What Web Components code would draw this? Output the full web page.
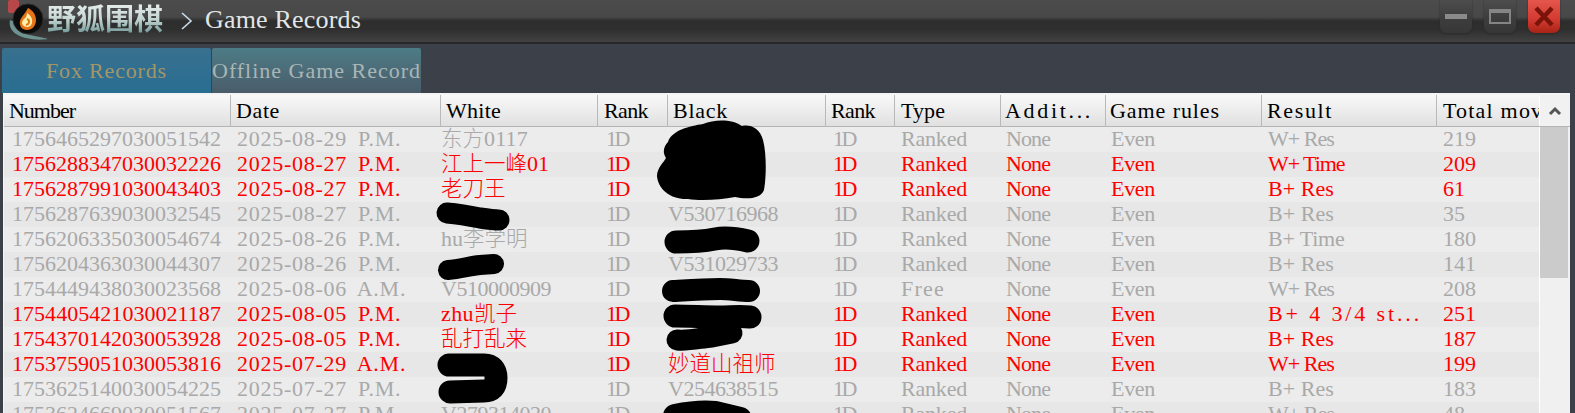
<!DOCTYPE html>
<html>
<head>
<meta charset="utf-8">
<title>Game Records</title>
<style>
  html, body { margin: 0; height: 413px; overflow: hidden; background: #3c4048; }
  body { display: flex; flex-direction: column; font-family: "Liberation Serif", "Noto Sans CJK SC", serif; }
</style>
</head>
<body>
<fox-titlebar>Game Records</fox-titlebar>
<fox-tabs>
  <fox-tab active>Fox Records</fox-tab>
  <fox-tab>Offline Game Record</fox-tab>
</fox-tabs>
<record-table></record-table>

<script>
const COLUMNS = [227, 210, 157, 70, 158, 69, 106, 105, 156, 175, 102];
const HEAD_PAD = [5, 5, 5, 6, 5, 5, 6, 4, 4, 5, 6];
const CELL_PAD = [8, 6, 0, 8, 0, 7, 6, 5, 5, 6, 6];
const HEADS = ["Number", "Date", "White", "Rank", "Black", "Rank", "Type", "Addit...", "Game rules", "Result", "Total moves"];

// [red?, number, date, white, black, type, result, moves]
const ROWS = [
  [0, "1756465297030051542", "2025-08-29 P.M.", "东方0117", "", "Ranked", "W+ Res", "219"],
  [1, "1756288347030032226", "2025-08-27 P.M.", "江上一峰01", "", "Ranked", "W+ Time", "209"],
  [1, "1756287991030043403", "2025-08-27 P.M.", "老刀王", "", "Ranked", "B+ Res", "61"],
  [0, "1756287639030032545", "2025-08-27 P.M.", "", "V530716968", "Ranked", "B+ Res", "35"],
  [0, "1756206335030054674", "2025-08-26 P.M.", "hu李学明", "", "Ranked", "B+ Time", "180"],
  [0, "1756204363030044307", "2025-08-26 P.M.", "", "V531029733", "Ranked", "B+ Res", "141"],
  [0, "1754449438030023568", "2025-08-06 A.M.", "V510000909", "", "Free", "W+ Res", "208"],
  [1, "1754405421030021187", "2025-08-05 P.M.", "zhu凯子", "", "Ranked", "B+ 4 3/4 st...", "251"],
  [1, "1754370142030053928", "2025-08-05 P.M.", "乱打乱来", "", "Ranked", "B+ Res", "187"],
  [1, "1753759051030053816", "2025-07-29 A.M.", "", "妙道山祖师", "Ranked", "W+ Res", "199"],
  [0, "1753625140030054225", "2025-07-27 P.M.", "", "V254638515", "Ranked", "B+ Res", "183"],
  [0, "1753624669030051567", "2025-07-27 P.M.", "V279314020", "", "Ranked", "W+ Res", "48"]
];

const SERIF = `font-family: "Liberation Serif", serif; font-size: 22px;`;
const measure = document.createElement("canvas").getContext("2d");

// the reference font is fixed width (half an em per latin char), the installed serif
// is not, so each run gets the spacing that brings it back to that width
function fit(text, advance = 11, size = 22) {
  measure.font = `${size}px "Liberation Serif"`;
  const date = text.match(/^(\S+-\S+) (\S+)$/);
  if (date) {
    // keep the A.M./P.M. part on the same column in every row
    const ls = (advance * date[1].length - measure.measureText(date[1]).width) / date[1].length;
    const ws = advance - measure.measureText(" ").width - ls;
    return `letter-spacing:${ls.toFixed(2)}px;word-spacing:${ws.toFixed(2)}px;`;
  }
  const ls = (advance * text.length - measure.measureText(text).width) / text.length;
  return `letter-spacing:${ls.toFixed(2)}px;`;
}

// CJK runs are twice the width of the latin ones, so they get their own span
function cellHtml(text) {
  return text.split(/([\u4e00-\u9fff]+)/).filter(Boolean).map((part) =>
    /[\u4e00-\u9fff]/.test(part)
      ? `<span class="cjk">${part}</span>`
      : `<span style="${fit(part)}">${part}</span>`).join("");
}

class WindowButton extends HTMLElement {
  constructor() {
    super();
    this.attachShadow({ mode: "open" });
    this.shadowRoot.innerHTML = `
      <style>
        :host { display: flex; width: 32px; height: 33px; border-radius: 0 0 7px 7px; align-items: center; justify-content: center;
          background: linear-gradient(#4d4d4d, #3d3d3d 55%, #373737); box-shadow: 0 1px 2px #2a2a2a; }
        :host([kind="close"]) { background: linear-gradient(#e4564c, #d23a30 60%, #a92316); }
        svg { display: block; }
      </style>
      <svg width="32" height="33" viewBox="0 0 32 33"></svg>
    `;
  }

  connectedCallback() {
    const icons = {
      min: `<rect x="5" y="14" width="22" height="5" fill="#8a8a8a"/>`,
      max: `<rect x="6" y="10" width="20" height="13" fill="none" stroke="#858585" stroke-width="2"/><rect x="5" y="9" width="22" height="4" fill="#858585"/>`,
      close: `<path d="M8 8 L24 25 M24 8 L8 25" stroke="#7a140a" stroke-width="4.5" fill="none"/>`
    };
    this.shadowRoot.querySelector("svg").innerHTML = icons[this.getAttribute("kind")];
  }
}
customElements.define("window-button", WindowButton);

class FoxTitlebar extends HTMLElement {
  constructor() {
    super();
    this.attachShadow({ mode: "open" });
    this.shadowRoot.innerHTML = `
      <style>
        :host { display: flex; flex: none; height: 44px; box-sizing: border-box; align-items: flex-start; overflow: hidden;
          border-bottom: 2px solid #26272b;
          background: linear-gradient(#4c4c4c, #484848 40%, #2d2d2d 50%, #2f2f2f 70%, #424242); }
        .logo { flex: none; width: 47px; height: 42px; }
        .logo svg { display: block; }
        .brand { flex: none; width: 126px; font: bold 29px/34px "Noto Sans CJK SC", sans-serif; letter-spacing: 0;
          background: linear-gradient(#eef3f1, #c5d6d3 55%, #6f9796); -webkit-background-clip: text; background-clip: text; color: transparent; }
        .chevron { flex: none; margin: 12px 12px 0 8px; display: block; }
        .title { flex: 1; color: #e2e6e6; font-family: "Liberation Serif", serif; font-size: 26px; line-height: 40px; white-space: nowrap; }
        .buttons { display: flex; gap: 12px; margin-right: 15px; }
      </style>
      <div class="logo">
        <svg width="47" height="42" viewBox="0 0 47 42">
          <path d="M10 20 C7 34 24 42 50 39 C36 36 20 36 15 22 Z" fill="#6d9290"/>
          <rect x="8" y="0" width="11" height="13" rx="2" fill="#b8474a"/>
          <circle cx="28" cy="19" r="15" fill="#0c0c0c" stroke="#2a2a2a"/>
          <path d="M28 8 C32 10 36 14 36 20 C36 26 32 30 27 30 C22 30 19 26 20 21 C21 17 25 14 28 8 Z" fill="#e8741a"/>
          <path d="M27 13 C30 15 33 18 32 23 C31 27 27 28 24 26 C21 24 22 21 24 19 C26 18 27 16 27 13 Z" fill="#fff2a8"/>
          <path d="M27 19 C30 20 30 24 26 25" stroke="#e8741a" stroke-width="2" fill="none"/>
        </svg>
      </div>
      <div class="brand">野狐围棋</div>
      <svg class="chevron" width="12" height="18" viewBox="0 0 12 18"><path d="M1 1 L10 9 L1 17" fill="none" stroke="#c9dcec" stroke-width="1.6"/></svg>
      <div class="title"><slot></slot></div>
      <div class="buttons">
        <window-button kind="min"></window-button>
        <window-button kind="max"></window-button>
        <window-button kind="close"></window-button>
      </div>
    `;
  }

  connectedCallback() {
    this.shadowRoot.querySelector(".title").style.cssText = fit(this.textContent.trim(), 13, 26);
  }
}
customElements.define("fox-titlebar", FoxTitlebar);

class FoxTabs extends HTMLElement {
  constructor() {
    super();
    this.attachShadow({ mode: "open" });
    this.shadowRoot.innerHTML = `
      <style>
        :host { display: flex; flex: none; gap: 1px; padding: 4px 0 0 2px; height: 45px; }
      </style>
      <slot></slot>
    `;
  }
}
customElements.define("fox-tabs", FoxTabs);

class FoxTab extends HTMLElement {
  constructor() {
    super();
    this.attachShadow({ mode: "open" });
    this.shadowRoot.innerHTML = `
      <style>
        :host { display: flex; width: 209px; height: 45px; align-items: center; justify-content: center; white-space: nowrap; overflow: hidden;
          border-radius: 2px 2px 0 0; color: #a9b6b6; ${SERIF}
          background: linear-gradient(#4d7c86, #4a5c6a); }
        :host([active]) { color: #a39669; background: linear-gradient(#39708e, #296e92); }
        .label { padding-top: 1px; }
      </style>
      <div class="label"><slot></slot></div>
    `;
  }

  connectedCallback() {
    this.style.cssText = fit(this.textContent.trim());
  }
}
customElements.define("fox-tab", FoxTab);

class RecordRow extends HTMLElement {
  constructor() {
    super();
    this.attachShadow({ mode: "open" });
  }

  set cells(values) {
    const html = values.map((v, i) =>
      `<div class="cell" style="padding-left:${CELL_PAD[i]}px">${cellHtml(v)}</div>`).join("");
    this.shadowRoot.innerHTML = `
      <style>
        :host { display: grid; grid-template-columns: ${COLUMNS.map((c) => c + "px").join(" ")}; height: 25px;
          color: #a9a9a9; background: #ececec; ${SERIF} }
        :host([red]) { color: #ff0000; }
        :host([alt]) { background: #e7e7e7; }
        .cell { box-sizing: border-box; white-space: nowrap; line-height: 23px; height: 25px; }
        .cjk { font-family: "Noto Sans CJK SC", sans-serif; font-size: 21.5px; letter-spacing: 0; font-weight: 300; line-height: 0; }
      </style>
      ${html}
    `;
  }
}
customElements.define("record-row", RecordRow);

// hand drawn privacy marks, they lie over the rows
class RedactMarks extends HTMLElement {
  constructor() {
    super();
    this.attachShadow({ mode: "open" });
    this.shadowRoot.innerHTML = `
      <style>
        :host { display: block; position: absolute; left: -4px; top: -95px; width: 1575px; height: 413px; pointer-events: none; }
        svg { display: block; }
        path.s { fill: none; stroke: #000; stroke-linecap: round; stroke-linejoin: round; }
      </style>
      <svg width="1575" height="413" viewBox="0 0 1575 413">
        <path fill="#000" d="M668 142 C672 130 690 126 703 124 C715 119 732 119 742 126 C750 124 760 128 763 140 C767 155 766 180 764 190 C760 200 745 199 735 197 C720 200 700 201 688 199 C672 200 658 190 657 176 C657 168 664 162 666 158 C662 152 664 146 668 142 Z"/>
        <path class="s" stroke-width="21" d="M447 213 C458 214 470 216 480 218 C487 219 494 220 499 220"/>
        <path class="s" stroke-width="23" d="M676 242 C690 242 705 241 715 239 C725 237 735 238 748 241"/>
        <path class="s" stroke-width="20" d="M448 270 C460 269 470 266 480 265 L494 264"/>
        <path class="s" stroke-width="22" d="M673 291 C690 290 705 289 720 289 C730 289 740 291 749 291"/>
        <path class="s" stroke-width="23" d="M675 316 C690 316 705 317 720 317 C730 317 740 316 750 317"/>
        <path class="s" stroke-width="21" d="M677 340 C690 341 700 338 712 337 L732 333"/>
        <path class="s" stroke-width="23" d="M449 365 L484 365 C492 365 496 370 496 378 C496 387 492 391 484 391 L450 392"/>
        <path class="s" stroke-width="24" d="M675 416 C690 413 705 412 715 413 L740 419"/>
      </svg>
    `;
  }
}
customElements.define("redact-marks", RedactMarks);

class RecordTable extends HTMLElement {
  constructor() {
    super();
    this.attachShadow({ mode: "open" });
    const heads = HEADS.map((h, i) =>
      `<div class="head" style="padding-left:${HEAD_PAD[i]}px;${fit(h)}">${h}</div>`).join("");
    this.shadowRoot.innerHTML = `
      <style>
        :host { display: block; position: relative; flex: 1; min-height: 0; margin: 0 5px 0 3px; background: #f0f0f0;
          border-top: 2px solid #f4f4f4; border-left: 1px solid #f4f4f4; overflow: hidden; }
        .top { display: grid; grid-template-columns: ${COLUMNS.map((c) => c + "px").join(" ")} 1fr; height: 31px;
          border-bottom: 1px solid #b4b4b4; color: #000; ${SERIF} }
        .head { box-sizing: border-box; overflow: hidden; white-space: nowrap; line-height: 32px; border-right: 1px solid #b9b9b9;
          background: linear-gradient(#f9f9f9, #e0e0e0); }
        .head:nth-child(11) { border-right: none; }
        .corner { display: flex; align-items: center; justify-content: center; background: #f1f1f1; border-left: 1px solid #fff; }
        .body { display: flex; }
        .rows { flex: none; width: 1535px; overflow: hidden; }
        .bar { flex: 1; background: #f0f0f0; border-left: 1px solid #fff; }
        .thumb { width: 28px; height: 151px; background: #cbcbcb; }
      </style>
      <div class="top">
        ${heads}
        <div class="corner"><svg width="14" height="10" viewBox="0 0 14 10"><path d="M2 8 L7 3 L12 8" fill="none" stroke="#555" stroke-width="3"/></svg></div>
      </div>
      <div class="body">
        <div class="rows"></div>
        <div class="bar"><div class="thumb"></div></div>
      </div>
      <redact-marks></redact-marks>
    `;
    const wrap = this.shadowRoot.querySelector(".rows");
    ROWS.forEach((r, i) => {
      const row = document.createElement("record-row");
      if (r[0]) row.setAttribute("red", "");
      if (i % 2) row.setAttribute("alt", "");
      row.cells = [r[1], r[2], r[3], "1D", r[4], "1D", r[5], "None", "Even", r[6], r[7]];
      wrap.appendChild(row);
    });
  }
}
customElements.define("record-table", RecordTable);
</script>
</body>
</html>
